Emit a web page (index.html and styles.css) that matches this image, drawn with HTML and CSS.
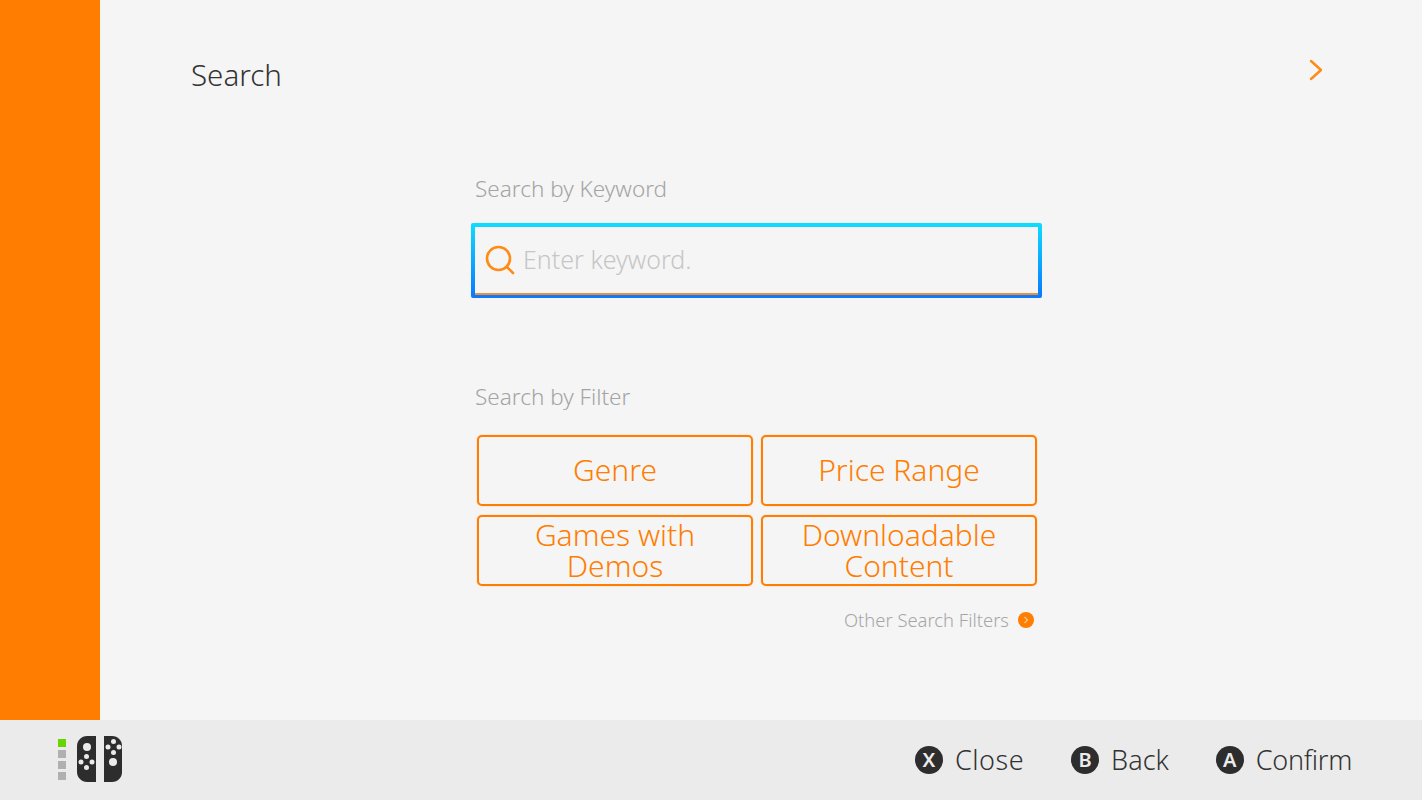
FILE: index.html
```html
<!DOCTYPE html>
<html lang="en">
<head>
<meta charset="utf-8">
<title>Search</title>
<link rel="stylesheet" href="styles.css">
</head>
<body>
<div class="app">
  <div class="top">
    <aside class="side"></aside>
    <main class="main">
      <header class="head">
        <h1 class="title">Search</h1>
        <svg class="chev" width="14" height="22" viewBox="0 0 14 22"><path d="M2 2l10 9-10 9" fill="none" stroke="#ff8a14" stroke-width="2.4" stroke-linecap="round" stroke-linejoin="round"/></svg>
      </header>
      <section class="panel">
        <div class="label">Search by Keyword</div>
        <div class="field">
          <div class="field-inner">
            <svg class="glass" width="32" height="32" viewBox="0 0 32 32"><circle cx="14.500" cy="14.500" r="11.500" fill="none" stroke="#ff8a14" stroke-width="2.600"/><path d="M23 23l6 6" stroke="#ff8a14" stroke-width="2.600" stroke-linecap="round"/></svg>
            <span class="placeholder">Enter keyword.</span>
          </div>
        </div>
        <div class="label label-filter">Search by Filter</div>
        <div class="grid">
          <button class="btn">Genre</button>
          <button class="btn">Price Range</button>
          <button class="btn">Games with<br>Demos</button>
          <button class="btn">Downloadable<br>Content</button>
        </div>
        <div class="other">
          <span>Other Search Filters</span>
          <svg width="16" height="16" viewBox="0 0 16 16"><circle cx="8" cy="8" r="8" fill="#ff7d00"/><path d="M6.500 5l3 3-3 3" fill="none" stroke="#ffc98a" stroke-width="1.200"/></svg>
        </div>
      </section>
    </main>
  </div>
  <footer class="foot">
    <div class="joy">
      <div class="leds"><i class="led on"></i><i class="led"></i><i class="led"></i><i class="led"></i></div>
      <svg class="cons" width="46" height="46" viewBox="0 0 46 46">
        <path d="M19 0H10C4.500 0 0 4.500 0 10V36C0 41.500 4.500 46 10 46H19Z" fill="#2d2d2d"/>
        <path d="M27 0H35C41 0 45 4.500 45 10V36C45 41.500 41 46 35 46H27Z" fill="#2d2d2d"/>
        <g fill="#ebebeb">
          <circle cx="10" cy="11" r="4"/>
          <circle cx="9.500" cy="20.500" r="2.500"/><circle cx="9.500" cy="31.500" r="2.500"/><circle cx="4" cy="26" r="2.500"/><circle cx="15" cy="26" r="2.500"/>
          <circle cx="36" cy="26" r="4"/>
          <circle cx="36.500" cy="5.500" r="2.500"/><circle cx="36.500" cy="16.500" r="2.500"/><circle cx="31" cy="11" r="2.500"/><circle cx="42" cy="11" r="2.500"/>
        </g>
      </svg>
    </div>
    <div class="hints">
      <div class="hint hint-close"><span class="key">X</span>Close</div>
      <div class="hint"><span class="key">B</span>Back</div>
      <div class="hint hint-confirm"><span class="key">A</span>Confirm</div>
    </div>
  </footer>
</div>
</body>
</html>
```

FILE: styles.css
```css
* { box-sizing: border-box; }
html, body { margin: 0; padding: 0; }
body { font-family: "Noto Sans", "Open Sans", sans-serif; font-weight: 350; background: #f5f5f5; color: #2d2d2d; overflow: hidden; }
.app { width: 1422px; height: 800px; display: flex; flex-direction: column; }
.top { display: flex; height: 720px; }
.side { width: 100px; background: #ff7d00; }
.main { flex: 1; display: flex; flex-direction: column; }
.head { display: flex; justify-content: space-between; align-items: flex-start; padding: 55px 99px 0 91px; height: 120px; }
.title { margin: 0; font-size: 29.500px; font-weight: 350; line-height: 40px; color: #333; }
.chev { margin-top: 4px; }
.panel { width: 571px; margin-left: 371px; }
.label { font-size: 22.500px; line-height: 30px; color: #a4a4a4; padding-left: 4px; margin-top: 54px; }
.field { margin-top: 19px; height: 75px; padding: 4px 4px 3px 4px; background: linear-gradient(#0fdcff, #0a78ff); border-radius: 2px; }
.field-inner { height: 100%; background: #f5f5f5; border-bottom: 2px solid #e8913a; display: flex; align-items: center; padding: 0 9px 0 9px; }
.glass { flex: none; }
.placeholder { margin-left: 7px; margin-top: -2px; font-size: 25px; color: #c6c6c6; }
.label-filter { margin-top: 84px; }
.grid { margin: 23px 0 0 6px; display: grid; grid-template-columns: 276px 276px; grid-auto-rows: 71px; gap: 9px 8px; }
.btn { font: inherit; font-size: 30px; line-height: 31px; color: #ff7d00; background: none; border: 2px solid #ff7d00; box-shadow: 0 0 1px #ff7d00; border-radius: 5px; padding: 0 0 2px; }
.other { display: flex; justify-content: flex-end; align-items: center; gap: 9px; margin-top: 20px; padding-right: 8px; font-size: 18.400px; line-height: 28px; color: #a6a6a6; }
.foot { height: 80px; background: #ebebeb; display: flex; justify-content: space-between; align-items: center; padding: 0 70px 0 58px; }
.joy { display: flex; align-items: center; gap: 11px; }
.cons { margin-top: -2px; }
.leds { display: flex; flex-direction: column; gap: 3px; margin-top: -2px; }
.led { display: block; width: 8px; height: 8px; background: #b0b0b0; }
.led.on { background: #66d500; }
.hints { display: flex; gap: 47px; }
.hint { display: flex; align-items: center; gap: 12px; font-size: 27px; line-height: 40px; color: #333; }
.hint-close { letter-spacing: .5px; }
.hint-confirm { letter-spacing: -.3px; }
.key { width: 28px; height: 28px; border-radius: 50%; background: #2d2d2d; color: #ebebeb; font-size: 20px; font-weight: 600; line-height: 28px; text-align: center; letter-spacing: 0; }
```
